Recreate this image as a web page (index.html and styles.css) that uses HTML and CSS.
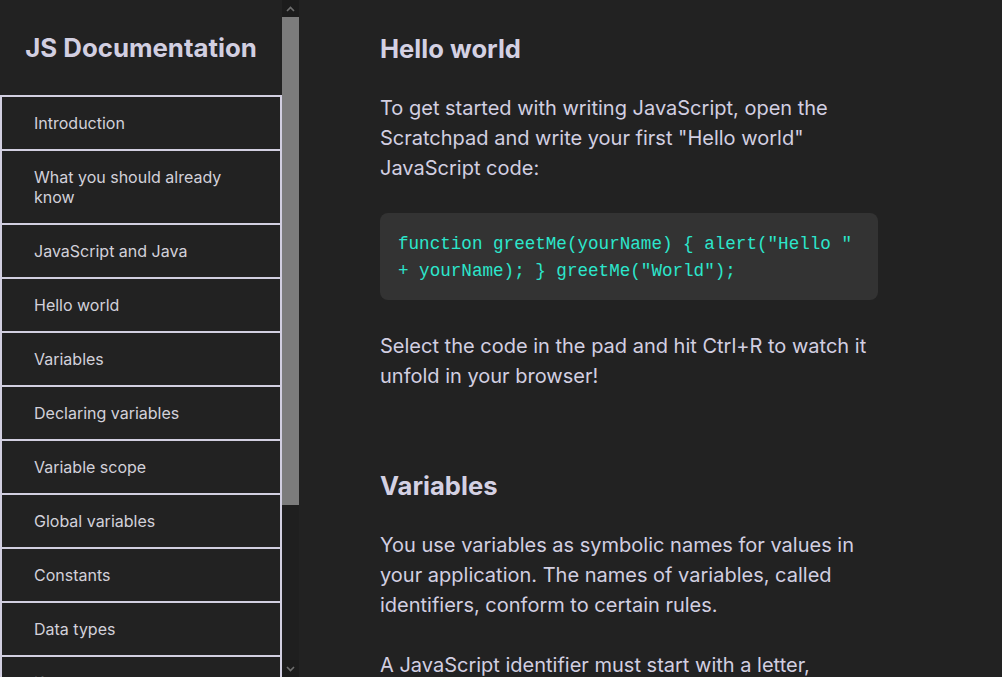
FILE: index.html
```html
<!DOCTYPE html>
<html lang="en">
<head>
<meta charset="utf-8">
<title>JS Documentation</title>
<link rel="stylesheet" href="styles.css">
</head>
<body>
<div class="page">
  <div class="sidebar">
    <nav class="sidebar-content" id="navbar">
      <header class="sidebar-title">JS Documentation</header>
      <ul class="nav-list">
        <li class="nav-item"><a class="nav-link" href="#Introduction">Introduction</a></li>
        <li class="nav-item"><a class="nav-link" href="#What_you_should_already_know">What you should already know</a></li>
        <li class="nav-item"><a class="nav-link" href="#JavaScript_and_Java">JavaScript and Java</a></li>
        <li class="nav-item"><a class="nav-link" href="#Hello_world">Hello world</a></li>
        <li class="nav-item"><a class="nav-link" href="#Variables">Variables</a></li>
        <li class="nav-item"><a class="nav-link" href="#Declaring_variables">Declaring variables</a></li>
        <li class="nav-item"><a class="nav-link" href="#Variable_scope">Variable scope</a></li>
        <li class="nav-item"><a class="nav-link" href="#Global_variables">Global variables</a></li>
        <li class="nav-item"><a class="nav-link" href="#Constants">Constants</a></li>
        <li class="nav-item"><a class="nav-link" href="#Data_types">Data types</a></li>
        <li class="nav-item"><a class="nav-link" href="#if...else_statement">if...else statement</a></li>
        <li class="nav-item"><a class="nav-link" href="#while_statement">while statement</a></li>
        <li class="nav-item"><a class="nav-link" href="#Function_declarations">Function declarations</a></li>
        <li class="nav-item"><a class="nav-link" href="#Reference">Reference</a></li>
      </ul>
    </nav>
    <div class="scrollbar" aria-hidden="true">
      <div class="scroll-btn">
        <svg width="9" height="6" viewBox="0 0 9 6"><path d="M1 5 L4.5 1.5 L8 5" fill="none" stroke="#6e6e6e" stroke-width="1.6"/></svg>
      </div>
      <div class="scroll-thumb"></div>
      <div class="scroll-track"></div>
      <div class="scroll-btn">
        <svg width="9" height="6" viewBox="0 0 9 6"><path d="M1 1 L4.5 4.5 L8 1" fill="none" stroke="#6e6e6e" stroke-width="1.6"/></svg>
      </div>
    </div>
  </div>
  <main class="main" id="main-doc">
    <section class="main-section" id="Hello_world">
      <h2 class="section-title">Hello world</h2>
      <p class="text">To get started with writing JavaScript, open the Scratchpad and write your first "Hello world" JavaScript code:</p>
      <code class="code">function greetMe(yourName) { alert("Hello " + yourName); } greetMe("World");</code>
      <p class="text">Select the code in the pad and hit Ctrl+R to watch it unfold in your browser!</p>
    </section>
    <section class="main-section" id="Variables">
      <h2 class="section-title">Variables</h2>
      <p class="text">You use variables as symbolic names for values in your application. The names of variables, called identifiers, conform to certain rules.</p>
      <p class="text">A JavaScript identifier must start with a letter, underscore (_), or dollar sign ($); subsequent characters can also be digits (0-9). Because JavaScript is case sensitive, letters include the characters "A" through "Z" (uppercase) and the characters "a" through "z" (lowercase).</p>
    </section>
  </main>
</div>
</body>
</html>
```
FILE: styles.css
```css
* {
  box-sizing: border-box;
}

html, body {
  margin: 0;
  padding: 0;
  height: 100%;
  background: #222222;
}

body {
  font-family: Inter, "Noto Sans", sans-serif;
  color: #d2cfe1;
  overflow: hidden;
}

.page {
  display: flex;
  height: 100vh;
}

.sidebar {
  flex: 0 0 299px;
  height: 100vh;
  display: flex;
  background: #222222;
}

.sidebar-content {
  flex: 0 0 282px;
  height: 100vh;
  overflow: hidden;
}

.sidebar-title {
  height: 95px;
  display: flex;
  align-items: center;
  justify-content: center;
  font-size: 25.8px;
  font-weight: 700;
  color: #d2cfe1;
  padding-bottom: 1px;
}

.nav-list {
  list-style: none;
  margin: 0;
  padding: 0;
  border-top: 2px solid #d2cfe1;
}

.nav-item {
  border: 2px solid #d2cfe1;
  border-top: none;
}

.nav-link {
  display: block;
  padding: 16px 32px;
  font-size: 16px;
  line-height: 20px;
  color: #d2d1da;
  text-decoration: none;
}

.scrollbar {
  flex: 0 0 17px;
  display: flex;
  flex-direction: column;
  background: #1e1e1e;
}

.scroll-btn {
  flex: 0 0 17px;
  display: flex;
  align-items: center;
  justify-content: center;
  background: #1c1c1c;
}

.scroll-thumb {
  flex: 0 0 488px;
  background: #7c7c7c;
}

.scroll-track {
  flex: 1 1 auto;
  background: #1f1f1f;
}

.main {
  flex: 1 1 auto;
  overflow: hidden;
  padding: 33px 0 0 81px;
}

.main-section {
  width: 498px;
  margin-bottom: 79px;
}

.section-title {
  margin: 0 0 28px;
  font-size: 25.6px;
  line-height: 32px;
  font-weight: 700;
  color: #d4d1e3;
}

.text {
  margin: 0 0 30px;
  font-size: 20px;
  line-height: 30px;
  color: #d2cfe1;
}

.code {
  display: block;
  margin: 0 0 31px;
  padding: 18px 18px 15px;
  background: #333333;
  border-radius: 8px;
  font-family: "Liberation Mono", "Courier New", monospace;
  font-size: 17.6px;
  line-height: 27px;
  color: #2ce6cc;
}
```
